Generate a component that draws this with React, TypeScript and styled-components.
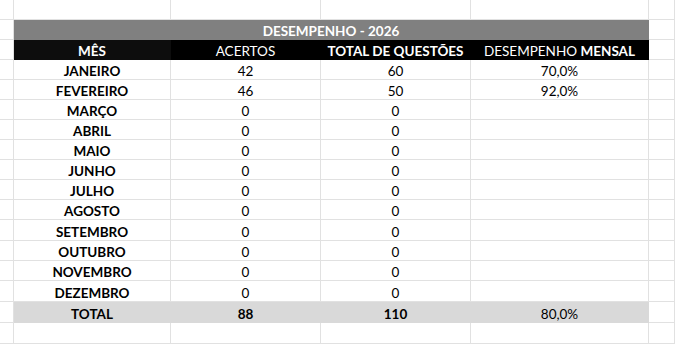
import { FC, Fragment } from 'react';
import styled, { createGlobalStyle } from 'styled-components';

interface IMonthRow {
    month: string;
    hits: number;
    total: number;
    perf?: string;
}

const months: IMonthRow[] = [
    { month: 'JANEIRO', hits: 42, total: 60, perf: '70,0%' },
    { month: 'FEVEREIRO', hits: 46, total: 50, perf: '92,0%' },
    { month: 'MARÇO', hits: 0, total: 0 },
    { month: 'ABRIL', hits: 0, total: 0 },
    { month: 'MAIO', hits: 0, total: 0 },
    { month: 'JUNHO', hits: 0, total: 0 },
    { month: 'JULHO', hits: 0, total: 0 },
    { month: 'AGOSTO', hits: 0, total: 0 },
    { month: 'SETEMBRO', hits: 0, total: 0 },
    { month: 'OUTUBRO', hits: 0, total: 0 },
    { month: 'NOVEMBRO', hits: 0, total: 0 },
    { month: 'DEZEMBRO', hits: 0, total: 0 },
];

// row heights follow the sheet: a few rows are one pixel taller
const rowHeights = [20, 20, 20, 20, 20, 20, 20, 20, 20, 20, 20, 21, 20, 20, 21, 21, 21, 30];

const GlobalStyle = createGlobalStyle`
  html, body {
    margin: 0;
    padding: 0;
    background: #fff;
    overflow: hidden;
  }
  body {
    font-family: Lato, "Open Sans", "Liberation Sans", sans-serif;
  }
`;

const Sheet = styled.div`
  display: grid;
  grid-template-columns: 14px 157px 150px 150px 178px 1fr;
  grid-template-rows: ${rowHeights.map((h) => `${h}px`).join(' ')};
  width: 675px;
  height: 347px;
  overflow: hidden;
`;

const Cell = styled.div<{ $fill?: string; $bold?: boolean; $color?: string; $span?: number }>`
  box-sizing: border-box;
  display: flex;
  align-items: center;
  justify-content: center;
  padding-top: 3px;
  border-right: 1px solid ${(p) => p.$fill ?? '#e1e1e1'};
  border-bottom: 1px solid ${(p) => p.$fill ?? '#e1e1e1'};
  background: ${(p) => p.$fill ?? '#fff'};
  color: ${(p) => p.$color ?? '#000'};
  font-size: 13.5px;
  font-weight: ${(p) => (p.$bold ? 700 : 400)};
  white-space: nowrap;
  overflow: hidden;
  ${(p) => (p.$span ? `grid-column: span ${p.$span};` : '')}
`;

const Strong = styled.span`
  font-weight: 700;
`;

const Empty: FC<{ n: number }> = ({ n }) => (
    <>
        {Array.from({ length: n }).map((_, i) => (
            <Cell key={i} />
        ))}
    </>
);

const TITLE = '#808080';
const TOTAL = '#d9d9d9';

export default function App() {
    return (
        <>
            <GlobalStyle />
            <Sheet>
                <Empty n={6} />

                <Cell />
                <Cell $fill={TITLE} $color="#fff" $bold $span={4}>DESEMPENHO - 2026</Cell>
                <Cell />

                <Cell />
                <Cell $fill="#0d0d0d" $color="#fff" $bold>MÊS</Cell>
                <Cell $fill="#000" $color="#fff">ACERTOS</Cell>
                <Cell $fill="#000" $color="#fff" $bold>TOTAL DE QUESTÕES</Cell>
                <Cell $fill="#000" $color="#fff">
                    DESEMPENHO&nbsp;<Strong>MENSAL</Strong>
                </Cell>
                <Cell />

                {months.map((m) => (
                    <Fragment key={m.month}>
                        <Cell />
                        <Cell $bold>{m.month}</Cell>
                        <Cell>{m.hits}</Cell>
                        <Cell>{m.total}</Cell>
                        <Cell>{m.perf ?? ''}</Cell>
                        <Cell />
                    </Fragment>
                ))}

                <Cell />
                <Cell $fill={TOTAL} $bold>TOTAL</Cell>
                <Cell $fill={TOTAL} $bold>88</Cell>
                <Cell $fill={TOTAL} $bold>110</Cell>
                <Cell $fill={TOTAL}>80,0%</Cell>
                <Cell />

                <Empty n={6} />
            </Sheet>
        </>
    );
}
